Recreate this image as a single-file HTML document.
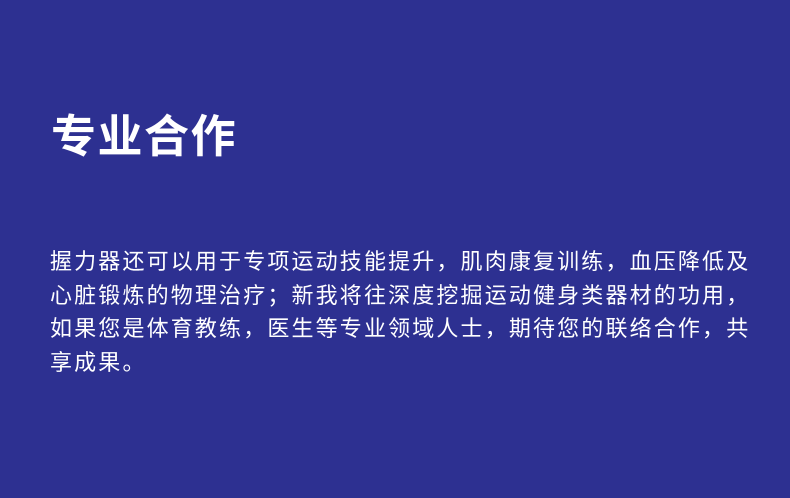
<!DOCTYPE html>
<html><head><meta charset="utf-8"><style>
html,body{margin:0;padding:0}
body{width:790px;height:498px;background:#2d3091;overflow:hidden;position:relative;font-family:"Liberation Sans","Noto Sans CJK SC",sans-serif;color:#fff}
h1{position:absolute;left:51px;top:110px;margin:0;font-size:45px;font-weight:bold;letter-spacing:1.5px;line-height:54px}
p{position:absolute;left:50px;top:245px;margin:0;font-size:22px;letter-spacing:2.15px;line-height:33.5px;white-space:nowrap}
</style></head><body>
<h1>专业合作</h1>
<p>握力器还可以用于专项运动技能提升，肌肉康复训练，血压降低及<br>心脏锻炼的物理治疗；新我将往深度挖掘运动健身类器材的功用，<br>如果您是体育教练，医生等专业领域人士，期待您的联络合作，共<br>享成果。</p>
</body></html>
